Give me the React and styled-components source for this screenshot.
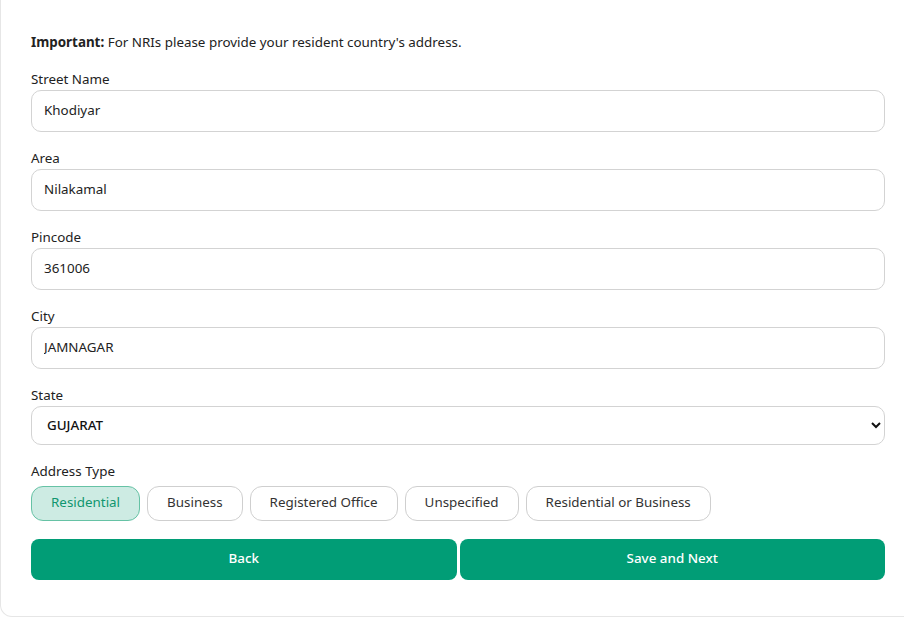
import React, { useState } from 'react';
import styled, { createGlobalStyle } from 'styled-components';

const GlobalStyle = createGlobalStyle`
  html, body {
    margin: 0;
    padding: 0;
    background: #fff;
    overflow: hidden;
  }
  body {
    font-family: "Noto Sans", "Open Sans", sans-serif;
    color: #222;
  }
`;

const Card = styled.section`
  background: #fff;
  width: calc(100% + 20px);
  border: 1px solid #e6e6e6;
  border-top: none;
  border-radius: 0 0 12px 12px;
  box-sizing: border-box;
  padding: 33px 38px 36px 30px;
`;

const Note = styled.p`
  margin: 0 0 19px;
  font-size: 13.4px;
  line-height: 18px;
  color: #222;
  b {
    font-weight: 700;
  }
`;

const Field = styled.div`
  display: flex;
  flex-direction: column;
  gap: ${(p) => p.$gap || 2}px;
  margin-bottom: ${(p) => p.$mb ?? 17}px;
`;

const Label = styled.label`
  font-size: 13.4px;
  line-height: 18px;
  color: #222;
`;

const Input = styled.input`
  height: 42px;
  box-sizing: border-box;
  border: 1px solid #d3d3d3;
  border-radius: 10px;
  padding: 0 12px 3px;
  font-family: inherit;
  font-size: 13.4px;
  color: #222;
  outline: none;
`;

const Select = styled.select`
  height: 39px;
  box-sizing: border-box;
  border: 1px solid #d3d3d3;
  border-radius: 10px;
  padding: 0 11px 1px;
  font-family: inherit;
  font-size: 13.4px;
  font-weight: 500;
  color: #111;
  background: #fff;
  outline: none;
`;

const Chips = styled.div`
  display: flex;
  gap: 7px;
`;

const Chip = styled.button`
  height: 35px;
  padding: 0 19px 3px;
  border-radius: 12px;
  border: 1px solid ${(p) => (p.$active ? '#66c2a5' : '#cfcfcf')};
  background: ${(p) => (p.$active ? '#cdebe3' : '#fff')};
  color: ${(p) => (p.$active ? '#10966f' : '#333')};
  font-family: inherit;
  font-size: 13.4px;
  cursor: pointer;
`;

const Actions = styled.div`
  display: grid;
  grid-template-columns: 1fr 1fr;
  gap: 3px;
`;

const Button = styled.button`
  height: 41px;
  padding: 0 0 3px;
  border: none;
  border-radius: 8px;
  background: #019d76;
  color: #fff;
  font-family: inherit;
  font-size: 13.4px;
  font-weight: 500;
  cursor: pointer;
`;

const fields = [
  { label: 'Street Name', value: 'Khodiyar' },
  { label: 'Area', value: 'Nilakamal' },
  { label: 'Pincode', value: '361006' },
  { label: 'City', value: 'JAMNAGAR' },
];

const types = ['Residential', 'Business', 'Registered Office', 'Unspecified', 'Residential or Business'];

const App = () => {
  const [type, setType] = useState('Residential');

  return (
    <>
      <GlobalStyle />
      <Card>
        <Note>
          <b>Important:</b> For NRIs please provide your resident country's address.
        </Note>

        {fields.map((f) => (
          <Field key={f.label}>
            <Label>{f.label}</Label>
            <Input defaultValue={f.value} />
          </Field>
        ))}

        <Field>
          <Label>State</Label>
          <Select defaultValue="GUJARAT">
            <option>GUJARAT</option>
            <option>MAHARASHTRA</option>
            <option>RAJASTHAN</option>
          </Select>
        </Field>

        <Field $gap={6} $mb={18}>
          <Label>Address Type</Label>
          <Chips>
            {types.map((t) => (
              <Chip key={t} $active={type === t} onClick={() => setType(t)}>
                {t}
              </Chip>
            ))}
          </Chips>
        </Field>

        <Actions>
          <Button>Back</Button>
          <Button>Save and Next</Button>
        </Actions>
      </Card>
    </>
  );
};

export default App;
